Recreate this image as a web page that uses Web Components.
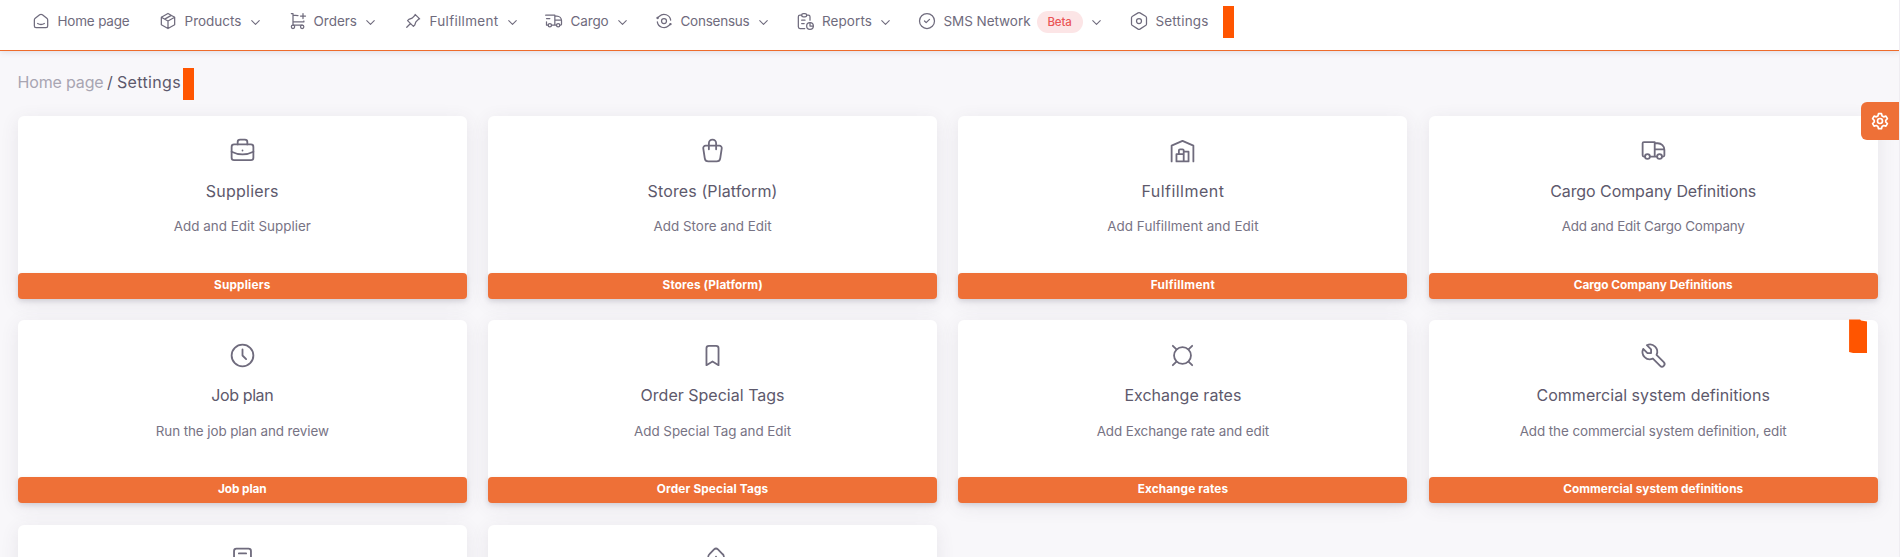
<!DOCTYPE html>
<html lang="en"><head><meta charset="utf-8"><title>Settings</title>
<style>
html,body{margin:0;height:557px;overflow:hidden;background:#f8f7fa}
body{font-family:Inter,"Open Sans",sans-serif;color:#6f6b7d}
</style></head><body>
<settings-page></settings-page>
<script>
const ICONS={
home:'<path d="M19 8.71l-5.333-4.148a2.666 2.666 0 0 0-3.274 0l-5.334 4.148a2.665 2.665 0 0 0-1.029 2.105v7.2a2 2 0 0 0 2 2h12a2 2 0 0 0 2-2v-7.2c0-.823-.38-1.6-1.03-2.105M16 15c-2.21 1.333-5.792 1.333-8 0"/>',
box:'<path d="M12 3l8 4.5v9l-8 4.5-8-4.5v-9zM12 12l8-4.5M12 12v9M12 12l-8-4.5M16 5.25l-8 4.5"/>',
cart:'<circle cx="6" cy="19" r="2"/><circle cx="17" cy="19" r="2"/><path d="M17 17H6V3H4M6 5l6 .429m7.138 6.573l-.143 1H6M15 6h6M18 3v6"/>',
pin:'<path d="M15 4.5l-4 4-4 1.5-1.5 1.5 7 7L14 17l1.5-4 4-4M9 15l-4.5 4.5M14.5 4L20 9.500"/>',
express:'<circle cx="7" cy="17" r="2"/><circle cx="17" cy="17" r="2"/><path d="M5 17H3v-4M2 5h11v12M9 17h6M19 17h1a1 1 0 0 0 1-1v-4.500A5.500 5.500 0 0 0 15.500 6H13M13 11h7.800M3 9h4"/>',
consensus:'<circle cx="12" cy="12" r="3"/><path d="M20 11A8.100 8.100 0 0 0 6.500 6.200L4 8.300M4 13a8.100 8.100 0 0 0 13.500 4.800L20 15.700"/><circle cx="4.300" cy="8.300" r=".7"/><circle cx="19.700" cy="15.700" r=".7"/>',
report:'<path d="M8 5H6a2 2 0 0 0-2 2v12a2 2 0 0 0 2 2h5.697M18 14v4h4M18 11V7a2 2 0 0 0-2-2h-2M8 11h4M8 15h3"/><rect x="8" y="3" width="6" height="4" rx="2"/><circle cx="18" cy="18" r="4"/>',
check:'<circle cx="12" cy="12" r="9"/><path d="M9 12l2 2 4-4"/>',
hex:'<path d="M19.875 6.270a2.225 2.225 0 0 1 1.125 1.948v7.284c0 .809-.443 1.555-1.158 1.948l-6.750 4.270a2.269 2.269 0 0 1-2.184 0l-6.750-4.270A2.225 2.225 0 0 1 3 15.502V8.217c0-.809.443-1.554 1.158-1.947l6.750-3.980a2.330 2.330 0 0 1 2.250 0z"/><circle cx="12" cy="12" r="3"/>',
down:'<path d="M6 9l6 6 6-6"/>',
briefcase:'<rect x="3" y="7" width="18" height="13" rx="2"/><path d="M8 7V5a2 2 0 0 1 2-2h4a2 2 0 0 1 2 2v2M12 12v.01M3 13a20 20 0 0 0 18 0"/>',
bag:'<path d="M6.331 8H17.670a2 2 0 0 1 1.977 2.304l-1.255 8.152A3 3 0 0 1 15.426 21H8.574a3 3 0 0 1-2.965-2.544l-1.255-8.152A2 2 0 0 1 6.331 8zM9 11V6a3 3 0 0 1 6 0v5"/>',
warehouse:'<path d="M3 21V8l9-4 9 4v13M13 13h4v8H7v-6h6M13 21v-9a1 1 0 0 0-1-1h-2a1 1 0 0 0-1 1v3"/>',
truck:'<circle cx="7" cy="17" r="2"/><circle cx="17" cy="17" r="2"/><path d="M5 17H4a1 1 0 0 1-1-1V6a1 1 0 0 1 1-1h9v12M9 17h6M19 17h1a1 1 0 0 0 1-1v-4.500A5.500 5.500 0 0 0 15.500 6H13M13 11h7.800"/>',
clock:'<circle cx="12" cy="12" r="9"/><path d="M12 7v5l3 3"/>',
bookmark:'<path d="M9 4h6a2 2 0 0 1 2 2v14l-5-3-5 3V6a2 2 0 0 1 2-2"/>',
currency:'<circle cx="12" cy="12" r="7"/><path d="M4 4l3 3M20 4l-3 3M4 20l3-3M20 20l-3-3"/>',
tool:'<path d="M7 10h3V7L6.500 3.500a6 6 0 0 1 8 8l6 6a2 2 0 0 1-3 3l-6-6a6 6 0 0 1-8-8z"/>',
note:'<rect x="5" y="3" width="14" height="18" rx="2"/><path d="M9 7h6M9 11h6M9 15h4"/>',
drop:'<path d="M13.300 3.700a2.300 2.300 0 0 1 3.200 0l3.800 3.800a3 3 0 0 1 .4 4.200L15 18l-5.700-6.300a3 3 0 0 1 .2-4.200zM14.900 9.600v.01"/>',
gear:'<path d="M10.200 3.200h3.600l.7 2.700 1.900 1.100 2.700-.8 1.800 3.100-2 1.900v2l2 1.900-1.800 3.100-2.700-.8-1.900 1.100-.7 2.700h-3.600l-.7-2.700-1.900-1.100-2.700.8-1.800-3.100 2-1.900v-2l-2-1.900 1.800-3.100 2.700.8 1.900-1.100z"/><circle cx="12" cy="12" r="3"/>'};
const define=(name,html,init)=>customElements.define(name,class extends HTMLElement{
 connectedCallback(){ if(this.shadowRoot)return; const t=document.createElement('template'); t.innerHTML=html; this.attachShadow({mode:'open'}).append(t.content.cloneNode(true)); init&&init.call(this,this.shadowRoot); }
});
define('ui-icon','<style>:host{display:block;flex:none;width:var(--size,20px);height:var(--size,20px)}svg{display:block;width:100%;height:100%;fill:none;stroke:currentColor;stroke-width:var(--stroke,1.5);stroke-linecap:round;stroke-linejoin:round}</style><svg viewBox="0 0 24 24"></svg>',function(r){r.querySelector('svg').innerHTML=ICONS[this.getAttribute('name')]});
/* Text tracked to occupy a given advance width. */
define('ui-text','<style>:host{display:block;flex:none;white-space:nowrap}span{display:inline-block}</style><span></span>',function(r){
 const s=r.querySelector('span'),t=this.getAttribute('text'),w=+this.getAttribute('w');s.textContent=t;
 const gap=(w-s.getBoundingClientRect().width)/t.length;s.style.letterSpacing=gap+'px';this.style.width=w+'px';});
define('orange-mark','<style>:host{display:block;flex:none;width:11px;height:32px;background:#ff5500}</style>');
define('nav-item','<style>:host{display:flex;align-items:center;height:24px;flex:none;font-size:13.500px;line-height:24px}ui-text{margin-left:var(--gap,9px)}.c{--size:15px;--stroke:1.700;margin:3px 0 0 6px}.badge{display:flex;align-items:center;justify-content:center;box-sizing:border-box;width:46px;height:22px;margin:3px 0 0 6px;border-radius:11px;background:#fce5e6;color:#ea5455;font-size:11.500px;font-weight:500;line-height:20px}.badge ui-text{margin:0}.badge + .c{margin:4px 0 0 6px}</style>',function(r){
 const a=n=>this.getAttribute(n);
 r.innerHTML+=`<ui-icon name="${a('icon')}"></ui-icon><ui-text text="${a('label')}" w="${a('w')}"></ui-text>`+(a('badge')?`<span class="badge"><ui-text text="${a('badge')}" w="24"></ui-text></span>`:'')+(this.hasAttribute('menu')?'<ui-icon class="c" name="down"></ui-icon>':'');});
const nav=[['home','Home page',72],['box','Products',57,1],['cart','Orders',43.500,1],['pin','Fulfillment',69,1],['express','Cargo',38,1],['consensus','Consensus',69,1],['report','Reports',50,1],['check','SMS Network',87,1,'Beta'],['hex','Settings',53]];
const GAPS={home:7,box:7,cart:6,pin:7,express:7,consensus:7,report:7.500,check:7,hex:7};
define('top-nav','<style>:host{display:grid;grid-template-columns:127px 130px 115px 141px 110px 141px 122px 212px 94px auto;justify-content:start;box-sizing:border-box;height:51px;padding:9px 0 0 30.500px;background:#fff;border-bottom:1px solid #ee6c2c;box-shadow:0 1px 6px rgba(75,70,92,.15);color:#6f6b7d;position:relative}orange-mark{margin:-3px 0 0 .5px}nav-item{margin-top:-.5px}</style>',function(r){
 r.innerHTML+=nav.map(n=>`<nav-item icon="${n[0]}" label="${n[1]}" w="${n[2]}" style="--gap:${GAPS[n[0]]}px" ${n[3]?'menu':''} ${n[4]?`badge="${n[4]}"`:''}></nav-item>`).join('')+'<orange-mark></orange-mark>';});
define('bread-crumb','<style>:host{display:flex;align-items:center;height:32px;padding:17px 0 16px 17.500px;font-size:16px;line-height:29px;color:#5d596c}ui-text{margin-top:-3px}.home{color:#a8a5b2}.sep{margin-right:3px;margin-left:3.500px}orange-mark{margin-left:2px}</style><ui-text class="home" text="Home page" w="86"></ui-text><ui-text class="sep" text="/" w="7"></ui-text><ui-text text="Settings" w="64"></ui-text><orange-mark></orange-mark>');
define('setting-card','<style>:host{display:flex;flex-direction:column;align-items:center;box-sizing:border-box;height:183px;padding-top:20.200px;background:#fff;border-radius:6px;box-shadow:0 4px 18px rgba(75,70,92,.1);position:relative;min-width:0}.icon{--size:29px;--stroke:1.500;color:#6f6b7d}.t{margin-top:13.800px;font-size:16px;line-height:24px;color:#5d596c}.d{margin-top:13.200px;font-size:13.400px;line-height:20px;color:#777384}.b{display:flex;justify-content:center;width:calc(100% + .2px);height:26px;margin-top:auto;border-radius:4px;background:#ee7037;color:#fff;font-size:11.800px;font-weight:700;line-height:25px;box-shadow:0 2px 5px rgba(75,70,92,.18)}::slotted(*){position:absolute;right:10.500px;top:-1px}</style>',function(r){
 const a=n=>this.getAttribute(n),w=a('widths').split(',');
 r.innerHTML+=`<ui-icon class="icon" name="${a('icon')}"></ui-icon><ui-text class="t" text="${a('title-text')}" w="${w[0]}"></ui-text><ui-text class="d" text="${a('note')}" w="${w[1]}"></ui-text><div class="b"><ui-text text="${a('title-text')}" w="${w[2]}"></ui-text></div><slot></slot>`;});
const cards=[['briefcase','Suppliers','Add and Edit Supplier','73,137,56.5'],['bag','Stores (Platform)','Add Store and Edit','130,118,100'],['warehouse','Fulfillment','Add Fulfillment and Edit','83,151.5,64.5'],['truck','Cargo Company Definitions','Add and Edit Cargo Company','206,183,159'],['clock','Job plan','Run the job plan and review','62,173,48.5'],['bookmark','Order Special Tags','Add Special Tag and Edit','144,157,111.5'],['currency','Exchange rates','Add Exchange rate and edit','117,172.5,90.5'],['tool','Commercial system definitions','Add the commercial system definition, edit','233.5,267,180']];
define('card-grid','<style>:host{display:grid;grid-template-columns:repeat(4,448.800px);grid-auto-rows:183px;gap:21.400px 21.500px;padding-left:17.900px}.mark{width:18px;height:34px;background:#ff5500;clip-path:polygon(0 0,11px 0,12px 1px,18px 2px,18px 34px,6px 34px,0 32.500px)}.stub{display:flex;justify-content:center;box-sizing:border-box;padding-top:20.200px;background:#fff;border-radius:6px;box-shadow:0 4px 18px rgba(75,70,92,.1)}.stub ui-icon{--size:29px}</style>',function(r){
 r.innerHTML+=cards.map(c=>`<setting-card icon="${c[0]}" title-text="${c[1]}" note="${c[2]}" widths="${c[3]}">${c[0]=='tool'?'<div class="mark"></div>':''}</setting-card>`).join('')+'<div class="stub"><ui-icon name="note"></ui-icon></div><div class="stub"><ui-icon name="drop"></ui-icon></div>';});
define('theme-button','<style>:host{position:absolute;right:0;top:102px;width:38px;height:38px;display:flex;align-items:center;justify-content:center;background:#ee7037;border-radius:6px 0 0 6px;color:#fff;--size:20px;--stroke:2}</style><ui-icon name="gear"></ui-icon>');
define('settings-page','<style>:host{display:block;position:relative;box-sizing:border-box;width:1900px;height:557px;overflow:hidden;background:#f8f7fa;border-right:1px solid #efedf2}top-nav{margin-right:-1px}</style><top-nav></top-nav><bread-crumb></bread-crumb><card-grid></card-grid><theme-button></theme-button>');
</script></body></html>
